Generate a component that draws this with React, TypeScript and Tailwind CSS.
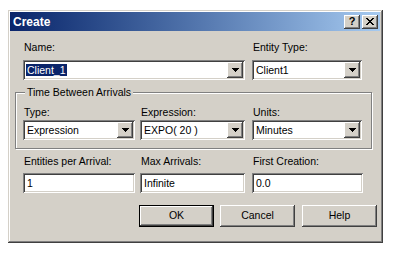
const raised =
  "shadow-[inset_-1px_-1px_#404040,inset_1px_1px_#ffffff,inset_-2px_-2px_#808080,inset_2px_2px_#d4d0c8]";
const sunken =
  "shadow-[inset_1px_1px_#808080,inset_-1px_-1px_#ffffff,inset_2px_2px_#404040,inset_-2px_-2px_#d4d0c8]";

function Arrow() {
  return (
    <svg width="7" height="4" viewBox="0 0 7 4" shapeRendering="crispEdges">
      <path d="M0 0h7v1h-1v1h-1v1h-1v1h-1v-1h-1v-1h-1v-1h-1z" fill="#000" />
    </svg>
  );
}

function Combo({ value, width, selected }: { value: string; width: string; selected?: boolean }) {
  return (
    <div className={`${width} h-[20px] bg-white p-[2px] flex items-center ${sunken}`}>
      <div className="flex-1 pl-[2px] leading-[13px] whitespace-nowrap overflow-hidden">
        {selected ? <span className="bg-[#0a246a] text-white px-[1px] -ml-[1px]">{value}</span> : value}
      </div>
      <div className={`w-[16px] h-[16px] bg-[#d4d0c8] flex items-center justify-center ${raised}`}>
        <Arrow />
      </div>
    </div>
  );
}

function Field({ value, width }: { value: string; width: string }) {
  return (
    <div className={`${width} h-[20px] bg-white pl-[4px] flex items-center leading-[13px] ${sunken}`}>{value}</div>
  );
}

function Label({ text, width }: { text: string; width: string }) {
  return <div className={`${width} pl-[1px] leading-[13px] whitespace-nowrap`}>{text}</div>;
}

function Button({ text, isDefault }: { text: string; isDefault?: boolean }) {
  if (isDefault) {
    return (
      <div className="w-[75px] h-[22px] border border-black">
        <div className={`w-full h-full bg-[#d4d0c8] flex items-center justify-center ${raised}`}>{text}</div>
      </div>
    );
  }
  return <div className={`w-[75px] h-[22px] bg-[#d4d0c8] flex items-center justify-center ${raised}`}>{text}</div>;
}

export default function App() {
  return (
    <div className="w-[393px] h-[256px] bg-white pt-[10px] pl-[8px] font-['Liberation_Sans',Arial,sans-serif] text-[10.5px] text-black">
      <div
        className={`w-[375px] h-[233px] bg-[#d4d0c8] p-[2px] flex flex-col shadow-[inset_-1px_-1px_#404040,inset_1px_1px_#d4d0c8,inset_-2px_-2px_#808080,inset_2px_2px_#ffffff]`}
      >
        {/* title bar */}
        <div className="h-[19px] mr-[1px] bg-gradient-to-r from-[#0a246a] to-[#a6caf0] flex items-center pl-[3px] pr-[2px]">
          <span className="flex-1 text-white font-bold text-[12px] leading-[14px]">Create</span>
          <div className="flex gap-[2px]">
            <div className={`w-[16px] h-[14px] bg-[#d4d0c8] flex items-center justify-center font-bold text-[11px] leading-none ${raised}`}>
              ?
            </div>
            <div className={`w-[16px] h-[14px] bg-[#d4d0c8] flex items-center justify-center ${raised}`}>
              <svg width="8" height="7" viewBox="0 0 8 7" shapeRendering="crispEdges">
                <path
                  d="M0 0h2v1h1v1h2v-1h1v-1h2v1h-1v1h-1v1h-1v1h1v1h1v1h1v1h-2v-1h-1v-1h-2v1h-1v1h-2v-1h1v-1h1v-1h1v-1h-1v-1h-1v-1h-1z"
                  fill="#000"
                />
              </svg>
            </div>
          </div>
        </div>

        {/* body */}
        <div className="flex-1 pl-[5px] flex flex-col">
          <div className="pl-[8px] mt-[10px] flex gap-[7px]">
            <Label text="Name:" width="w-[222px]" />
            <Label text="Entity Type:" width="w-[110px]" />
          </div>
          <div className="pl-[8px] mt-[6px] flex gap-[7px]">
            <Combo value="Client_1" width="w-[222px]" selected />
            <Combo value="Client1" width="w-[110px]" />
          </div>

          {/* group box */}
          <div className="relative mt-[6px] pt-[6px] w-[357px]">
            <div className="border border-[#808080] shadow-[inset_1px_1px_#ffffff,1px_1px_#ffffff] pl-[7px] pt-[13px] pb-[8px]">
              <div className="flex gap-[5px]">
                <Label text="Type:" width="w-[112px]" />
                <div className="flex gap-[7px]">
                  <Label text="Expression:" width="w-[105px]" />
                  <Label text="Units:" width="w-[110px]" />
                </div>
              </div>
              <div className="mt-[1px] flex gap-[5px]">
                <Combo value="Expression" width="w-[112px]" />
                <div className="flex gap-[7px]">
                  <Combo value="EXPO( 20 )" width="w-[105px]" />
                  <Combo value="Minutes" width="w-[110px]" />
                </div>
              </div>
            </div>
            <div className="absolute top-0 left-[10px] px-[2px] bg-[#d4d0c8] leading-[13px]">Time Between Arrivals</div>
          </div>

          <div className="pl-[8px] mt-[6px] flex gap-[5px]">
            <Label text="Entities per Arrival:" width="w-[112px]" />
            <div className="flex gap-[7px]">
              <Label text="Max Arrivals:" width="w-[105px]" />
              <Label text="First Creation:" width="w-[110px]" />
            </div>
          </div>
          <div className="pl-[8px] mt-[5px] flex gap-[5px]">
            <Field value="1" width="w-[112px]" />
            <div className="flex gap-[7px]">
              <Field value="Infinite" width="w-[105px]" />
              <Field value="0.0" width="w-[111px]" />
            </div>
          </div>

          <div className="mt-[12px] pl-[124px] flex">
            <Button text="OK" isDefault />
            <div className="ml-[6px]">
              <Button text="Cancel" />
            </div>
            <div className="ml-[7px]">
              <Button text="Help" />
            </div>
          </div>
        </div>
      </div>
    </div>
  );
}
